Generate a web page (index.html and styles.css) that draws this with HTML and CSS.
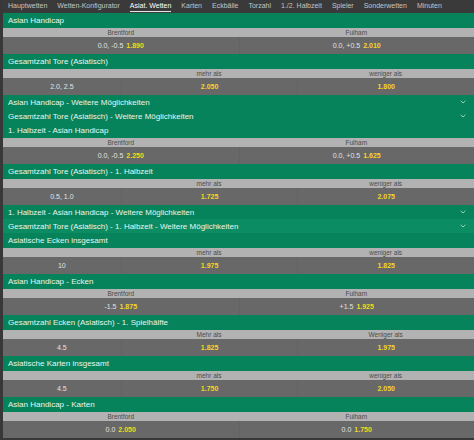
FILE: index.html
```html
<!DOCTYPE html>
<html lang="de">
<head>
<meta charset="utf-8">
<title>Asiat. Wetten</title>
<link rel="stylesheet" href="styles.css">
</head>
<body>
<div class="page">
  <nav class="tabs">
    <span class="tab">Hauptwetten</span>
    <span class="tab">Wetten-Konfigurator</span>
    <span class="tab active">Asiat. Wetten</span>
    <span class="tab">Karten</span>
    <span class="tab">Eckbälle</span>
    <span class="tab">Torzahl</span>
    <span class="tab">1./2. Halbzeit</span>
    <span class="tab">Spieler</span>
    <span class="tab">Sonderwetten</span>
    <span class="tab">Minuten</span>
  </nav>

  <section class="market">
    <div class="mhead">Asian Handicap</div>
    <div class="grid two">
      <div class="sub">Brentford</div><div class="sub">Fulham</div>
      <div class="odd"><span>0.0, -0.5</span><span class="price">1.890</span></div>
      <div class="odd"><span>0.0, +0.5</span><span class="price">2.010</span></div>
    </div>
  </section>

  <section class="market">
    <div class="mhead">Gesamtzahl Tore (Asiatisch)</div>
    <div class="grid three">
      <div class="sub"></div><div class="sub">mehr als</div><div class="sub">weniger als</div>
      <div class="odd"><span>2.0, 2.5</span></div>
      <div class="odd"><span class="price">2.050</span></div>
      <div class="odd"><span class="price">1.800</span></div>
    </div>
  </section>

  <div class="mhead collapsed">Asian Handicap - Weitere Möglichkeiten<svg class="chev" viewBox="0 0 6 4"><path d="M0.6 0.8 L3 3 L5.4 0.8"/></svg></div>
  <div class="mhead collapsed">Gesamtzahl Tore (Asiatisch) - Weitere Möglichkeiten<svg class="chev" viewBox="0 0 6 4"><path d="M0.6 0.8 L3 3 L5.4 0.8"/></svg></div>

  <section class="market">
    <div class="mhead">1. Halbzeit - Asian Handicap</div>
    <div class="grid two">
      <div class="sub">Brentford</div><div class="sub">Fulham</div>
      <div class="odd"><span>0.0, -0.5</span><span class="price">2.250</span></div>
      <div class="odd"><span>0.0, +0.5</span><span class="price">1.625</span></div>
    </div>
  </section>

  <section class="market">
    <div class="mhead">Gesamtzahl Tore (Asiatisch) - 1. Halbzeit</div>
    <div class="grid three">
      <div class="sub"></div><div class="sub">mehr als</div><div class="sub">weniger als</div>
      <div class="odd"><span>0.5, 1.0</span></div>
      <div class="odd"><span class="price">1.725</span></div>
      <div class="odd"><span class="price">2.075</span></div>
    </div>
  </section>

  <div class="mhead collapsed">1. Halbzeit - Asian Handicap - Weitere Möglichkeiten<svg class="chev" viewBox="0 0 6 4"><path d="M0.6 0.8 L3 3 L5.4 0.8"/></svg></div>
  <div class="mhead collapsed hover">Gesamtzahl Tore (Asiatisch) - 1. Halbzeit - Weitere Möglichkeiten<svg class="chev" viewBox="0 0 6 4"><path d="M0.6 0.8 L3 3 L5.4 0.8"/></svg></div>

  <section class="market">
    <div class="mhead">Asiatische Ecken insgesamt</div>
    <div class="grid three">
      <div class="sub"></div><div class="sub">mehr als</div><div class="sub">weniger als</div>
      <div class="odd"><span>10</span></div>
      <div class="odd"><span class="price">1.975</span></div>
      <div class="odd"><span class="price">1.825</span></div>
    </div>
  </section>

  <section class="market">
    <div class="mhead">Asian Handicap - Ecken</div>
    <div class="grid two">
      <div class="sub">Brentford</div><div class="sub">Fulham</div>
      <div class="odd"><span>-1.5</span><span class="price">1.875</span></div>
      <div class="odd"><span>+1.5</span><span class="price">1.925</span></div>
    </div>
  </section>

  <section class="market">
    <div class="mhead">Gesamtzahl Ecken (Asiatisch) - 1. Spielhälfte</div>
    <div class="grid three">
      <div class="sub"></div><div class="sub">Mehr als</div><div class="sub">Weniger als</div>
      <div class="odd"><span>4.5</span></div>
      <div class="odd"><span class="price">1.825</span></div>
      <div class="odd"><span class="price">1.975</span></div>
    </div>
  </section>

  <section class="market">
    <div class="mhead">Asiatische Karten insgesamt</div>
    <div class="grid three">
      <div class="sub"></div><div class="sub">mehr als</div><div class="sub">weniger als</div>
      <div class="odd"><span>4.5</span></div>
      <div class="odd"><span class="price">1.750</span></div>
      <div class="odd"><span class="price">2.050</span></div>
    </div>
  </section>

  <section class="market">
    <div class="mhead">Asian Handicap - Karten</div>
    <div class="grid two">
      <div class="sub">Brentford</div><div class="sub">Fulham</div>
      <div class="odd"><span>0.0</span><span class="price">2.050</span></div>
      <div class="odd"><span>0.0</span><span class="price">1.750</span></div>
    </div>
  </section>
</div>
</body>
</html>
```

FILE: styles.css
```css
html, body {
  margin: 0;
  padding: 0;
  background: #383838;
  font-family: "Liberation Sans", Arial, sans-serif;
}

.page {
  padding-left: 3px;
  overflow: hidden;
}

.tabs {
  display: flex;
  height: 13px;
  background: #3a3a3a;
  align-items: stretch;
}

.tab {
  position: relative;
  padding: 0 5px;
  font-size: 7px;
  line-height: 12px;
  color: #c4c4c4;
  white-space: nowrap;
}

.tab.active {
  color: #ffffff;
}

.tab.active::after {
  content: "";
  position: absolute;
  left: 5px;
  right: 5px;
  bottom: 1px;
  height: 1px;
  background: #e6e6e6;
}

.mhead {
  display: flex;
  align-items: center;
  justify-content: space-between;
  height: 15px;
  padding: 0 8px 0 5px;
  background: #06835b;
  color: #e9f5ef;
  font-size: 8px;
  white-space: nowrap;
}

.mhead.collapsed {
  height: 14px;
}

.mhead.hover {
  background: #0b8c62;
}

.chev {
  width: 6px;
  height: 4px;
  fill: none;
  stroke: #bfe6d3;
  stroke-width: 0.8;
}

.grid {
  display: grid;
}

.grid.two {
  grid-template-columns: 1fr 1fr;
}

.grid.three {
  grid-template-columns: 1fr 1.5fr 1.5fr;
}

.sub {
  height: 9px;
  line-height: 9px;
  background: #b2b2b2;
  color: #4c4c4c;
  font-size: 6.5px;
  text-align: center;
  white-space: nowrap;
}

.odd {
  display: flex;
  align-items: center;
  justify-content: center;
  gap: 3px;
  height: 17px;
  background: #686868;
  color: #e2e2e2;
  font-size: 7px;
  white-space: nowrap;
  border-left: 1px solid #636363;
}

.odd:nth-child(3), .grid.three .odd:nth-child(4) {
  border-left: none;
}

.price {
  color: #f2d81c;
  font-weight: bold;
}
```
